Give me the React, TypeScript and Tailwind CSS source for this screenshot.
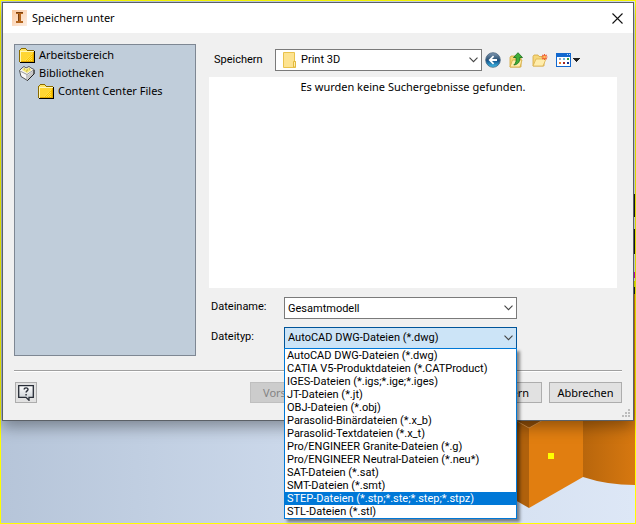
import { useState } from 'react';

const fileTypes = [
  'AutoCAD DWG-Dateien (*.dwg)',
  'CATIA V5-Produktdateien (*.CATProduct)',
  'IGES-Dateien (*.igs;*.ige;*.iges)',
  'JT-Dateien (*.jt)',
  'OBJ-Dateien (*.obj)',
  'Parasolid-Binärdateien (*.x_b)',
  'Parasolid-Textdateien (*.x_t)',
  'Pro/ENGINEER Granite-Dateien (*.g)',
  'Pro/ENGINEER Neutral-Dateien (*.neu*)',
  'SAT-Dateien (*.sat)',
  'SMT-Dateien (*.smt)',
  'STEP-Dateien (*.stp;*.ste;*.step;*.stpz)',
  'STL-Dateien (*.stl)',
];

function AppIcon() {
  return (
    <svg viewBox="0 0 15 16" className="h-4 w-[15px] shrink-0" aria-hidden="true">
      <defs>
        <linearGradient id="app" x1="0" y1="0" x2="1" y2="1">
          <stop offset="0" stopColor="#fbc9a0" />
          <stop offset="1" stopColor="#fdeee2" />
        </linearGradient>
      </defs>
      <rect width="15" height="16" fill="url(#app)" />
      <path d="M4 2h7v2H9v7h2v2H4v-2h2V4H4z" fill="#b5651d" />
      <path d="M4 2h7v1H4zM6 4h1v7H6z" fill="#7a3f10" />
    </svg>
  );
}

function TreeFolder() {
  return (
    <svg viewBox="0 0 16 15" className="h-[15px] w-4 shrink-0" shapeRendering="crispEdges" aria-hidden="true">
      <path d="M2 0h5v1h1v1h7v12H0V2h1V1h1z" fill="#8a6a00" />
      <path d="M15 3h1v12H1v-1h14z" fill="#000" />
      <path d="M2 1h5v1H2zM1 2h7v1H1z" fill="#ffe566" />
      <path d="M1 3h14v11H1z" fill="#ffd633" />
      <path d="M1 3h14v1H1zM1 4h1v10H1z" fill="#fff6b8" />
      <path d="m14 5v9H5z" fill="#fbc400" />
      <path d="M12 6h1v1h-1zM10 8h1v1h-1zM12 8h1v1h-1zM9 9h1v1H9zM11 9h1v1h-1zM8 10h1v1H8zM10 10h1v1h-1zM12 10h1v1h-1zM7 11h1v1H7zM9 11h1v1H9zM11 11h1v1h-1zM6 12h1v1H6zM8 12h1v1H8zM10 12h1v1h-1zM12 12h1v1h-1z" fill="#ffdf4a" />
      <path d="M14 4h1v10H2v-1h12z" fill="#e0a800" />
    </svg>
  );
}

function LibraryIcon() {
  return (
    <svg viewBox="0 0 16 15" className="h-[15px] w-4 shrink-0" aria-hidden="true">
      <path d="M.5 4.500 3 2l2-1.500L7 2l3-1.500L12 2l3 1.500v4L8.500 14.500 2 10.500z" fill="#f6f6f6" stroke="#333" strokeWidth=".8" />
      <path d="m3 4 2-2.500L7 3l3-1.500L12.500 4 8 7z" fill="#f4e77c" />
      <path d="m1 5 7 3.500L14.500 4M8 8.500v5" fill="none" stroke="#999" />
      <path d="m9 9 5-4v3l-5 5z" fill="#c6c6c6" />
      <path d="M15 4v4l-6.500 6.500" fill="none" stroke="#222" />
      <path d="M5 3h1M8 4h1M10 3h1M7 5h1" stroke="#bba934" />
    </svg>
  );
}

function PaleFolder() {
  return (
    <svg viewBox="0 0 14 16" className="h-4 w-3.5" aria-hidden="true">
      <path d="M.5.5h11v9h1v6H.5z" fill="#fde391" stroke="#e9c24c" />
      <path d="M10.500 9.500h2v5.500h-2z" fill="#ffeeb0" stroke="#e3b93d" />
    </svg>
  );
}

function BackIcon() {
  return (
    <svg viewBox="0 0 16 16" className="size-4" aria-hidden="true">
      <defs>
        <linearGradient id="back" x1="0" y1="0" x2="0" y2="1">
          <stop offset="0" stopColor="#8199b2" />
          <stop offset=".45" stopColor="#315779" />
          <stop offset=".55" stopColor="#15558d" />
          <stop offset="1" stopColor="#41c3ef" />
        </linearGradient>
      </defs>
      <circle cx="8" cy="8" r="7.300" fill="url(#back)" stroke="#48637d" strokeWidth=".8" />
      <path d="M8 3.500 3.500 8 8 12.500l1.200-1.200L7 9h5V7H7l2.200-2.300z" fill="#fff" />
    </svg>
  );
}

function UpFolderIcon() {
  return (
    <svg viewBox="0 0 15 16" className="h-4 w-[15px]" aria-hidden="true">
      <path d="M1 5.500 2 4h4l1 1.500h5V15H1z" fill="#f4d573" stroke="#d0a335" strokeWidth=".8" />
      <path d="m1 15 2.500-7H13l-2 7z" fill="#ffedac" stroke="#d5ac43" strokeWidth=".8" />
      <path d="M9 .7 4.500 5.500h2.500C7.500 9 7 11 4.800 13c4.200-.5 6.200-3 6-7.500H13.500z" fill="#3fae38" stroke="#176d1a" strokeWidth=".8" />
    </svg>
  );
}

function NewFolderIcon() {
  return (
    <svg viewBox="0 0 16 14" className="h-3.5 w-4" aria-hidden="true">
      <path d="M1 3.500 2 2h4l1 1.500h5V13H1z" fill="#f5d77b" stroke="#d4a63c" strokeWidth=".8" />
      <path d="m1 13 3-7h10l-3 7z" fill="#ffedac" stroke="#dcb34e" strokeWidth=".8" />
      <path d="M12.500 1v6M9.500 4h6M10.300 1.800l4.400 4.400M14.700 1.800l-4.400 4.400" stroke="#ef5a30" strokeWidth="1.200" />
      <circle cx="12.500" cy="4" r="1.300" fill="#ffc35c" />
    </svg>
  );
}

function ViewIcon() {
  return (
    <svg viewBox="0 0 24 14" className="h-3.5 w-6" shapeRendering="crispEdges" aria-hidden="true">
      <rect width="15" height="14" fill="#1268cf" />
      <path d="M1 4h13v9H1z" fill="#fff" />
      <path d="M11 1h1v1h-1zM13 1h1v1h-1z" fill="#b9d8ff" />
      <path d="M3 5h2v2H3z" fill="#9aa9bd" />
      <path d="M7 5h2v2H7z" fill="#6db7df" />
      <path d="M11 5h2v2h-2z" fill="#3a9c42" />
      <path d="M3 9h2v2H3z" fill="#e77728" />
      <path d="M7 9h2v2H7z" fill="#a42525" />
      <path d="M11 9h2v2h-2z" fill="#17338f" />
      <path d="M17 5h7v1h-1v1h-1v1h-1v1h-1V8h-1V7h-1V6h-1z" fill="#222" />
    </svg>
  );
}

function HelpIcon() {
  return (
    <svg viewBox="0 0 16 16" className="size-4" aria-hidden="true">
      <defs>
        <linearGradient id="help" x1="0" y1="0" x2="0" y2="1">
          <stop offset="0" stopColor="#fff" />
          <stop offset="1" stopColor="#c5cbd1" />
        </linearGradient>
      </defs>
      <path d="M.7.700h14.600v11.600H11v3l-3-3H.7z" fill="url(#help)" stroke="#272c36" strokeWidth="1.300" />
      <path d="M6.200 4.600c0-2.300 3.800-2.200 3.800-.2 0 1.500-1.900 1.500-1.900 3.200M8.100 9v1.500" fill="none" stroke="#272c36" strokeWidth="1.400" />
    </svg>
  );
}

function Chevron() {
  return (
    <svg viewBox="0 0 9 6" className="pointer-events-none absolute top-2 right-1 h-1.5 w-[9px]" aria-hidden="true">
      <path d="m.5.700 4 4 4-4" fill="none" stroke="#444" strokeWidth="1.100" />
    </svg>
  );
}

function Scene() {
  return (
    <svg viewBox="0 0 634 522" preserveAspectRatio="none" className="absolute inset-0 size-full" aria-hidden="true">
      <defs>
        <linearGradient id="sky" x1="0" y1="0" x2="1" y2="0">
          <stop offset="0" stopColor="#b6c5d9" />
          <stop offset=".45" stopColor="#cbd8ea" />
          <stop offset="1" stopColor="#dde7f6" />
        </linearGradient>
        <linearGradient id="curve" x1="0" y1="0" x2="1" y2="0">
          <stop offset="0" stopColor="#b8660c" />
          <stop offset="1" stopColor="#d77810" />
        </linearGradient>
      </defs>
      <rect width="634" height="522" fill="url(#sky)" />
      <path d="M582 300h52v184q-28 0-52-8z" fill="url(#curve)" />
      <path d="M528 427l14-8h40v57l-54 31z" fill="#e17e10" />
      <path d="M500 411l28 16v80l-28-16z" fill="#b0610c" />
      <path d="M514 419h28l-14 8z" fill="#955109" />
      <path d="m514 419 14 8 14-8" fill="none" stroke="#e89a43" strokeWidth=".7" />
      <path d="M547 452h6v6h-6z" fill="#ff0" />
      <path d="M632 193h2v23h-2zM632 228h2v25h-2zM632 286h2v7h-2z" fill="#15191f" />
      <path d="M632 271h2v6h-2z" fill="#d900d9" />
      <path d="M632 280h2v6h-2z" fill="#e2e600" />
      <path d="M632 293h2v10h-2z" fill="#d77810" />
    </svg>
  );
}

const field = 'h-[22px] w-full appearance-none rounded-none border outline-none';

export default function App() {
  const [name, setName] = useState('Gesamtmodell');
  const [type, setType] = useState(fileTypes[0]);
  const [active, setActive] = useState(11);

  return (
    <div className="relative min-h-screen border border-[#ffff00] font-['Noto_Sans',sans-serif] text-[11px] leading-4 text-black">
      <Scene />
      <main className="relative p-px">
        <section aria-labelledby="dialog-title" className="border border-[#5b6066] bg-[#f0f0f0] shadow-[0_6px_14px_rgba(0,0,0,0.35)]">
          <header className="flex h-[30px] items-center gap-[5px] bg-white pr-2.5 pl-[9px]">
            <AppIcon />
            <h1 id="dialog-title">Speichern unter</h1>
            <button type="button" aria-label="Schließen" className="ml-auto">
              <svg viewBox="0 0 11 11" className="size-[11px]" aria-hidden="true">
                <path d="m.5.500 10 10M10.500.500l-10 10" stroke="#111" strokeWidth="1.100" />
              </svg>
            </button>
          </header>

          <div className="flex gap-[13px] pt-[11px] pr-4 pl-[11px]">
            <nav aria-label="Orte" className="w-[182px] shrink-0 border border-[#7e8793] bg-[#c0cdda] px-1 py-px">
              <ul>
                <li className="flex h-[18px] items-center gap-1"><TreeFolder />Arbeitsbereich</li>
                <li className="flex h-[18px] items-center gap-1"><LibraryIcon />Bibliotheken</li>
                <li className="flex h-[18px] items-center gap-1 pl-[19px]"><TreeFolder />Content Center Files</li>
              </ul>
            </nav>

            <div className="min-w-0 flex-1 pt-[5px] pb-[7px]">
              <div className="flex items-center pl-[5px]">
                <label htmlFor="folder" className="w-[61px] font-['Roboto',sans-serif]">Speichern</label>
                <div className="relative max-w-[207px] flex-1">
                  <select id="folder" className={`${field} border-[#7a7a7a] bg-white pl-[25px] font-['Roboto',sans-serif]`}>
                    <option>Print 3D</option>
                  </select>
                  <span className="pointer-events-none absolute top-[3px] left-2"><PaleFolder /></span>
                  <Chevron />
                </div>
                <div className="ml-[3px] flex items-center gap-2">
                  <button type="button" aria-label="Zurück"><BackIcon /></button>
                  <button type="button" aria-label="Übergeordneter Ordner"><UpFolderIcon /></button>
                  <button type="button" aria-label="Neuer Ordner"><NewFolderIcon /></button>
                  <button type="button" aria-label="Ansicht"><ViewIcon /></button>
                </div>
              </div>

              <div className="mt-1.5 h-[211px] bg-white pt-0.5 text-center">Es wurden keine Suchergebnisse gefunden.</div>

              <div className="mt-[9px] flex pl-0.5">
                <label htmlFor="filename" className="w-[73px] pt-0.5 font-['Roboto',sans-serif]">Dateiname:</label>
                <div className="relative max-w-[233px] flex-1">
                  <input id="filename" value={name} onChange={(e) => setName(e.target.value)} className={`${field} border-[#7a7a7a] bg-white px-[3px] font-['Roboto',sans-serif]`} />
                  <Chevron />
                </div>
              </div>

              <div className="mt-2 flex pl-0.5">
                <label htmlFor="filetype" className="w-[73px] pt-0.5 font-['Roboto',sans-serif]">Dateityp:</label>
                <div className="relative max-w-[233px] flex-1">
                  <select id="filetype" value={type} onChange={(e) => setType(e.target.value)} className={`${field} border-[#005499] bg-[#cce4f7] px-[3px] font-['Roboto',sans-serif]`}>
                    {fileTypes.map((t) => <option key={t}>{t}</option>)}
                  </select>
                  <Chevron />
                  <ul role="listbox" aria-label="Dateitypen" className="absolute inset-x-0 top-[21px] z-10 border border-[#0078d7] bg-white font-['Roboto',sans-serif] leading-[13px] shadow-[3px_3px_3px_rgba(0,0,0,0.45)]">
                    {fileTypes.map((t, i) => (
                      <li
                        key={t}
                        role="option"
                        aria-selected={i === active}
                        onMouseEnter={() => setActive(i)}
                        onClick={() => setType(t)}
                        className={`px-0.5 whitespace-nowrap ${i === active ? 'bg-[#0078d7] text-white' : ''}`}
                      >
                        {t}
                      </li>
                    ))}
                  </ul>
                </div>
              </div>
            </div>
          </div>

          <hr className="mt-[14px] mr-[11px] ml-[11px] h-0.5 border-t border-b border-t-[#a0a0a0] border-b-white" />

          <footer className="flex items-center gap-[7px] pt-2.5 pr-[11px] pb-1.5 pl-3">
            <button type="button" aria-label="Hilfe" className="mr-auto flex h-[21px] w-[22px] items-center justify-center border border-[#adadad] bg-[#e1e1e1]"><HelpIcon /></button>
            <button type="button" disabled className="h-[21px] w-[108px] border border-[#bfbfbf] bg-[#cccccc] pl-3 text-left text-[#838383]">Vorschau...</button>
            <button type="button" className="h-[21px] w-[177px] border border-[#adadad] bg-[#e1e1e1] pr-3 text-right">Speichern</button>
            <button type="button" className="h-[21px] w-[73px] border border-[#adadad] bg-[#e1e1e1]">Abbrechen</button>
          </footer>
          <div className="flex justify-end px-[3px] pb-[3px]">
            <svg viewBox="0 0 8 8" className="size-2" shapeRendering="crispEdges" aria-hidden="true">
              <path d="M6 0h2v2H6zM3 3h2v2H3zM6 3h2v2H6zM0 6h2v2H0zM3 6h2v2H3zM6 6h2v2H6z" fill="#bdbdbd" />
            </svg>
          </div>
        </section>
      </main>
    </div>
  );
}
